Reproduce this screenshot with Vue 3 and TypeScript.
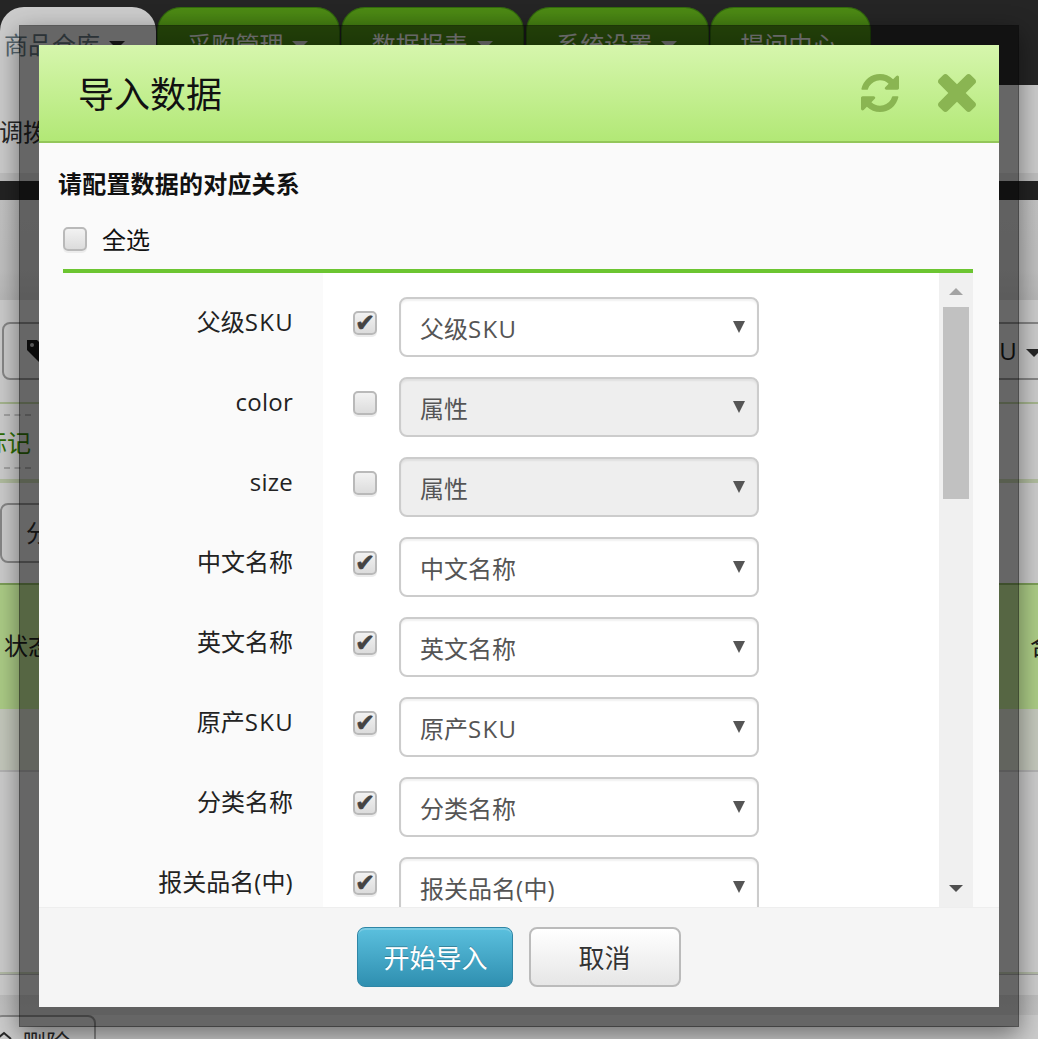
<script setup lang="ts">
interface Field { label: string; value: string; on: boolean }
interface Seg { text: string; cls: string }
const fields: Field[] = [
  { label: '父级SKU', value: '父级SKU', on: true },
  { label: 'color', value: '属性', on: false },
  { label: 'size', value: '属性', on: false },
  { label: '中文名称', value: '中文名称', on: true },
  { label: '英文名称', value: '英文名称', on: true },
  { label: '原产SKU', value: '原产SKU', on: true },
  { label: '分类名称', value: '分类名称', on: true },
  { label: '报关品名(中)', value: '报关品名(中)', on: true },
]
const tabs = [
  { name: '采购管理', caret: true },
  { name: '数据报表', caret: true },
  { name: '系统设置', caret: true },
  { name: '提问中心', caret: false },
]
function segs(s: string): Seg[] {
  return s
    .split(/([A-Z()]+|[a-z]+)/)
    .filter(Boolean)
    .map((text) => ({
      text,
      cls: /^[A-Z()]+$/.test(text) ? 'wide' : /^[a-z]+$/.test(text) ? 'soft' : '',
    }))
}
</script>

<template>
  <div class="page">
    <div class="bg">
      <nav class="nav">
        <div class="tab active">商品仓库<span class="caret"></span></div>
        <div v-for="t in tabs" :key="t.name" class="tab" :class="{ short: !t.caret }">
          {{ t.name }}<span v-if="t.caret" class="caret"></span>
        </div>
      </nav>
      <div class="subnav"><span>调拨</span></div>
      <div class="blackbar"></div>
      <div class="band"></div>
      <div class="toolbar">
        <div class="tool tool-left">
          <svg class="tag" viewBox="0 0 24 24"><path d="M0 0h10l14 14-10 10L0 10z" fill="#1c1c1c" /><circle cx="5" cy="5" r="2" fill="#ddd" /></svg>
        </div>
        <div class="tool tool-right"><span class="wide">SKU</span><span class="caret dark"></span></div>
      </div>
      <div class="filter">
        <div class="mark">标记</div>
      </div>
      <div class="actions"><div class="tool tool-cat">分类</div></div>
      <div class="thead"><span>状态</span><span>合计</span></div>
      <div class="trow"></div>
      <div class="tbody"></div>
      <div class="tfoot"></div>
      <div class="pager"></div>
      <div class="bottom">
        <div class="tool tool-del">
          <svg class="bin" viewBox="0 0 16 16"><path d="M1 12l7-6 7 6" fill="none" stroke="#333" stroke-width="2" /></svg>
          <span>删除</span>
        </div>
      </div>
    </div>

    <div class="overlay"></div>

    <section class="modal">
      <header class="head">
        <h2>导入数据</h2>
        <div class="head-icons">
          <svg viewBox="128 128 1536 1536"><path d="M1639 1056q0 5-1 7-64 268-268 434.5t-478 166.5q-146 0-282.5-55t-243.5-157l-129 129q-19 19-45 19t-45-19-19-45v-448q0-26 19-45t45-19h448q26 0 45 19t19 45-19 45l-137 137q71 66 161 102t187 36q134 0 250-65t186-179q11-17 53-117 8-23 30-23h192q13 0 22.5 9.5t9.5 22.5zm25-800v448q0 26-19 45t-45 19h-448q-26 0-45-19t-19-45 19-45l138-138q-148-137-349-137-134 0-250 65t-186 179q-11 17-53 117-8 23-30 23h-199q-13 0-22.5-9.5t-9.5-22.5v-7q65-268 270-434.5t480-166.5q146 0 284 55.5t245 156.5l130-129q19-19 45-19t45 19 19 45z" /></svg>
          <svg viewBox="302 366 1188 1188"><path d="M1490 1322q0 40-28 68l-136 136q-28 28-68 28t-68-28l-294-294-294 294q-28 28-68 28t-68-28l-136-136q-28-28-28-68t28-68l294-294-294-294q-28-28-28-68t28-68l136-136q28-28 68-28t68 28l294 294 294-294q28-28 68-28t68 28l136 136q28 28 28 68t-28 68l-294 294 294 294q28 28 28 68z" /></svg>
        </div>
      </header>

      <div class="body">
        <h3>请配置数据的对应关系</h3>
        <div class="select-all"><span class="check"></span><span class="all-text">全选</span></div>
        <div class="list">
          <div class="viewport">
            <div class="rows">
              <div v-for="f in fields" :key="f.label" class="row">
                <label class="lbl"><span v-for="(s, i) in segs(f.label)" :key="i" :class="s.cls">{{ s.text }}</span></label>
                <span class="check in-row" :class="{ on: f.on }"></span>
                <div class="select" :class="{ disabled: !f.on }">
                  <span v-for="(s, i) in segs(f.value)" :key="i" :class="s.cls">{{ s.text }}</span>
                  <svg class="arrow" viewBox="0 0 12 12"><path d="M0 0h12L6 12z" /></svg>
                </div>
              </div>
            </div>
          </div>
          <div class="scrollbar">
            <div class="sb-btn"><svg viewBox="0 0 14 7"><path d="M7 0l7 7H0z" fill="#a3a3a3" /></svg></div>
            <div class="thumb"></div>
            <div class="sb-btn down"><svg viewBox="0 0 14 7"><path d="M0 0h14L7 7z" fill="#505050" /></svg></div>
          </div>
        </div>
      </div>

      <footer class="foot">
        <button class="btn primary">开始导入</button>
        <button class="btn">取消</button>
      </footer>
    </section>
  </div>
</template>

<style>
html, body { margin: 0; background: #fff; }
</style>

<style scoped>
.page {
  position: relative;
  width: 1038px;
  height: 1039px;
  overflow: hidden;
  font-family: "Open Sans", "Noto Sans CJK SC", sans-serif;
  font-size: 24px;
  color: #222;
  background: #fff;
}
.wide { letter-spacing: 1.3px; margin-right: -1px; }
.soft { letter-spacing: .25px; }
.nav {
  height: 78px;
  padding-top: 7px;
  background: #2f2f2f;
  display: flex;
  gap: 1.33px;
}
.tab {
  width: 183px;
  flex: none;
  box-sizing: border-box;
  padding: 21px 0 0 30.5px;
  line-height: 34px;
  border-radius: 24px 24px 0 0;
  color: #fff;
  background: linear-gradient(#62b01a, #488a12 40px, #3f7d10);
  box-shadow: inset 0 0 0 1px rgba(0, 60, 0, .35);
}
.tab.short { width: 161px; }
.tab.active {
  width: 155.67px;
  padding-left: 4px;
  color: #6d808a;
  background: #fff;
  box-shadow: none;
}
.caret {
  display: inline-block;
  margin-left: 9px;
  vertical-align: 5px;
  border-left: 8px solid transparent;
  border-right: 8px solid transparent;
  border-top: 8px solid #ddd;
}
.tab.active .caret { border-top-color: #333; }
.caret.dark { border-top-color: #333; margin-left: 9px; vertical-align: 3px; }
.subnav {
  height: 96px;
  box-sizing: border-box;
  padding-top: 30px;
  line-height: 34px;
  color: #333;
  background: #fff;
  border-bottom: 8px solid #eee;
  white-space: nowrap;
}
.subnav span { margin-left: -1px; }
.blackbar { height: 19px; background: #2c2c2c; }
.band { height: 100px; background: linear-gradient(#f4f4f4, #f0f0f0 70%, #e6e6e6); }
.toolbar {
  height: 104px;
  box-sizing: border-box;
  padding-top: 22px;
  display: flex;
  justify-content: space-between;
  border-bottom: 2px solid #cfe3b2;
  background: #fff;
}
.tool {
  box-sizing: border-box;
  height: 58px;
  border: 2px solid #a8a8a8;
  border-radius: 8px;
  line-height: 54px;
  background: #fff;
}
.tool-left { width: 200px; margin-left: 2px; padding: 16px 0 0 23px; }
.tag { display: block; width: 24px; height: 24px; }
.tool-right { width: 160px; margin-right: -12px; text-align: right; padding-right: 8px; border-right: 0; }
.filter {
  height: 79px;
  box-sizing: border-box;
  padding-top: 10px;
  border-bottom: 4px solid #dcebc6;
  background: #fff;
}
.mark {
  height: 51px;
  line-height: 54px;
  margin-left: -17px;
  width: 48px;
  color: #3a8a06;
  border-top: 2px dashed #ccc;
  border-bottom: 2px dashed #ccc;
  white-space: nowrap;
}
.actions { height: 100px; box-sizing: border-box; padding-top: 20px; background: #fff; }
.tool-cat { width: 200px; padding-left: 24px; height: 60px; line-height: 56px; color: #333; }
.thead {
  height: 126px;
  box-sizing: border-box;
  padding: 44px 0 0 4px;
  display: flex;
  justify-content: space-between;
  line-height: 34px;
  margin-right: -40px;
  border-top: 2px solid #9cc66e;
  background: #d8ffa8;
  white-space: nowrap;
}
.trow {
  height: 63px;
  box-sizing: border-box;
  background: #f6fbec;
  border-bottom: 2px solid #e0e0e0;
}
.tbody { height: 200px; background: #fff; }
.tfoot { height: 2px; background: #dfe9d0; }
.pager { height: 21px; box-sizing: border-box; border-top: 1px solid #c4c4c4; background: #fff; }
.bottom {
  height: 45px;
  box-sizing: border-box;
  padding-top: 20px;
  background: linear-gradient(#ededed, #f2f2f2 20px, #fff 20px);
}
.tool-del {
  width: 102px;
  height: 58px;
  margin-left: -6px;
  display: flex;
  gap: 10px;
  line-height: 32px;
  padding-top: 10px;
  color: #333;
  white-space: nowrap;
}
.bin { width: 16px; height: 16px; flex: none; }
.overlay {
  position: absolute;
  inset: 0;
  background: rgba(0, 0, 0, .2);
}
.modal {
  position: absolute;
  left: 19px;
  top: 25px;
  width: 960px;
  height: 962px;
  display: flex;
  flex-direction: column;
  background: #fafafa;
  background-clip: padding-box;
  border: 20px solid rgba(0, 0, 0, .5);
  box-shadow: 0 8px 24px rgba(0, 0, 0, .45);
  color: #111;
}
.head {
  height: 96px;
  flex: none;
  display: flex;
  align-items: center;
  justify-content: space-between;
  padding: 0 23px 0 39px;
  background: linear-gradient(#d6f6ad, #b2e876);
  border-bottom: 2px solid #93c65a;
}
.head h2 { margin: 4px 0 0; font-size: 36px; font-weight: 400; line-height: 50px; }
.head-icons { display: flex; gap: 39px; }
.head-icons svg { display: block; width: 38px; height: 38px; fill: #8ab552; }
.body {
  flex: 1;
  min-height: 0;
  display: flex;
  flex-direction: column;
  padding-left: 20px;
}
.body h3 {
  margin: 0 0 0 -1px;
  padding-top: 24px;
  font-size: 24px;
  font-weight: 700;
  letter-spacing: .2px;
  line-height: 34px;
  color: #111;
}
.select-all {
  display: flex;
  align-items: center;
  gap: 15px;
  height: 36px;
  margin: 20px 0 12px 4px;
  line-height: 36px;
}
.all-text { padding-top: 2px; }
.check {
  position: relative;
  display: block;
  flex: none;
  box-sizing: border-box;
  width: 24px;
  height: 24px;
  border: 2px solid #b9b9b9;
  border-radius: 5px;
  background: linear-gradient(#f2f2f2, #dcdcdc);
  box-shadow: 0 2px 0 #ececec;
}
.check.on::after {
  content: "✔";
  position: absolute;
  left: 0;
  top: -3px;
  width: 20px;
  text-align: center;
  font: 24px/26px "DejaVu Sans", sans-serif;
  color: #444;
  -webkit-text-stroke: .6px #444;
}
.list {
  flex: 1;
  min-height: 0;
  width: 910px;
  margin-left: 4px;
  display: flex;
  border-top: 4px solid #6cc531;
}
.viewport { flex: 1; min-width: 0; overflow: hidden; }
.rows {
  min-height: 100%;
  padding-top: 4px;
  background: linear-gradient(90deg, transparent 260px, #fff 260px);
}
.row { display: flex; height: 80px; align-items: flex-start; }
.lbl {
  width: 230px;
  flex: none;
  padding-top: 30px;
  line-height: 30px;
  text-align: right;
  color: #222;
}
.check.in-row { margin: 34px 0 0 60px; }
.select {
  position: relative;
  box-sizing: border-box;
  width: 360px;
  height: 60px;
  flex: none;
  margin: 20px 0 0 22px;
  padding-left: 19px;
  line-height: 59px;
  color: #555;
  background: #fff;
  border: 2px solid #ccc;
  border-radius: 8px;
  box-shadow: inset 0 2px 2px rgba(0, 0, 0, .06);
}
.select.disabled { background: #eee; }
.arrow {
  position: absolute;
  right: 12px;
  top: 22px;
  width: 12px;
  height: 12px;
  fill: #555;
}
.scrollbar {
  width: 34px;
  flex: none;
  display: flex;
  flex-direction: column;
  background: #f0f0f0;
}
.sb-btn { height: 34px; flex: none; display: flex; justify-content: center; padding-top: 15px; box-sizing: border-box; }
.sb-btn svg { width: 14px; height: 7px; display: block; }
.sb-btn.down { margin-top: auto; padding-top: 12px; }
.thumb { height: 192px; margin: 0 4px; background: #c1c1c1; }
.foot {
  height: 100px;
  flex: none;
  box-sizing: border-box;
  display: flex;
  align-items: center;
  justify-content: center;
  gap: 16px;
  background: #f5f5f5;
  box-shadow: inset 0 1px 0 #eee;
}
.btn {
  box-sizing: border-box;
  width: 152px;
  height: 60px;
  padding: 0 1px 1px 0;
  font: inherit;
  font-size: 26px;
  color: #333;
  background: linear-gradient(#fff, #e6e6e6);
  border: 2px solid #bbb;
  border-radius: 8px;
  text-shadow: 0 1px 1px rgba(255, 255, 255, .75);
}
.btn.primary {
  width: 156px;
  padding: 0 0 1px 1px;
  color: #fff;
  background: linear-gradient(#5bc0de, #2f8fb0);
  border: 1px solid #2f86a6;
  box-shadow: inset 0 2px 0 rgba(255, 255, 255, .2);
  text-shadow: 0 -1px 0 rgba(0, 0, 0, .25);
}
</style>
